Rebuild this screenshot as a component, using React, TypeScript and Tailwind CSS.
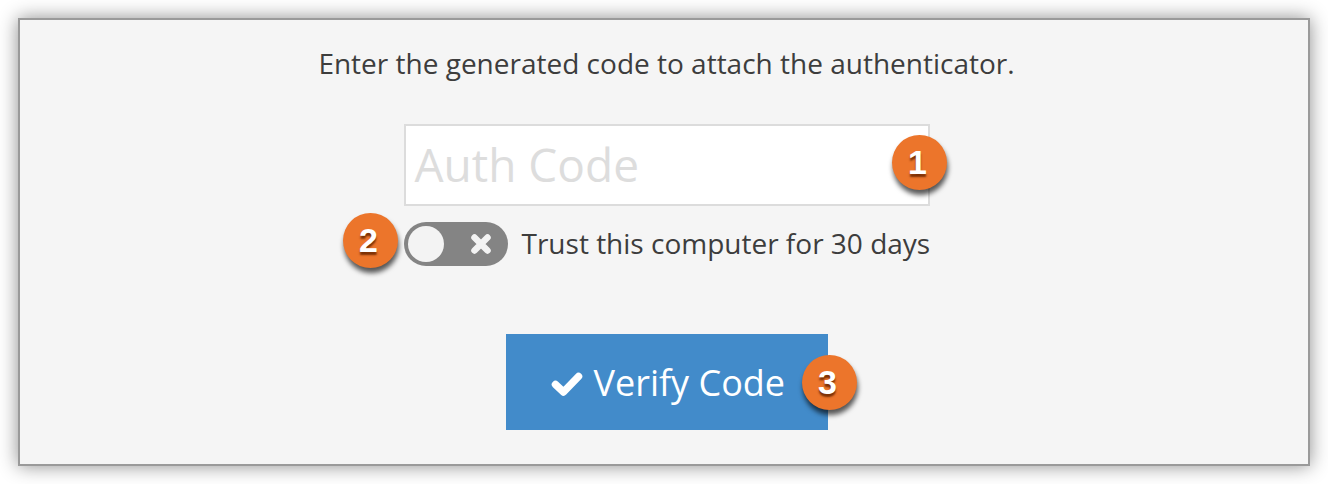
import React from "react";

function Badge({ n, className }: { n: string; className: string }) {
  return (
    <div
      className={`absolute w-[55px] h-[55px] pr-[3px] pb-[2px] rounded-full bg-[#ec752b] flex items-center justify-center text-white text-[34px] font-bold leading-none [font-family:'Liberation_Sans',sans-serif] [text-shadow:0_3px_2px_rgba(110,40,0,0.9)] shadow-[1px_5px_5px_rgba(0,0,0,0.65)] ${className}`}
    >
      {n}
    </div>
  );
}

export default function App() {
  return (
    <div className="w-[1328px] h-[484px] bg-white pt-[18px] pl-[18px] [font-family:'Open_Sans',sans-serif]">
      <div className="w-[1292px] h-[448px] pl-[5px] border-2 border-[#9a9a9a] bg-[#f5f5f5] shadow-[0_0_18px_rgba(0,0,0,0.45)] flex flex-col items-center">
        <p className="mt-[24px] h-[38px] leading-[38px] text-[28px] text-[#3d3d3d] whitespace-nowrap">
          Enter the generated code to attach the authenticator.
        </p>
        <div className="relative mt-[42px] w-[526px] h-[82px] border-2 border-[#dcdcdc] bg-white flex items-center pl-[9px] pb-[2px] text-[46px] text-[#dddddd]">
          Auth Code
          <Badge n="1" className="left-[486px] top-[9px]" />
        </div>
        <div className="mt-[16px] w-[526px] h-[44px] relative flex items-center gap-[14px]">
          <Badge n="2" className="left-[-61px] top-[-9px]" />
          <div className="w-[104px] h-[44px] shrink-0 rounded-full bg-[#848484] flex items-center justify-between pl-[4px] pr-[15px]">
            <div className="w-[36px] h-[36px] rounded-full bg-[#f3f3f3]" />
            <svg width="24" height="24" viewBox="0 0 24 24">
              <path d="M5.5 5.5 18.5 18.5M18.5 5.5 5.5 18.5" stroke="#f3f3f3" strokeWidth="6.5" strokeLinecap="round" />
            </svg>
          </div>
          <span className="text-[28px] text-[#3d3d3d] whitespace-nowrap pb-[2px]">Trust this computer for 30 days</span>
        </div>
        <div className="relative mt-[68px] w-[322px] h-[96px] bg-[#428bca] flex items-center pl-[45px] gap-[11px] text-white text-[36px]">
          <svg width="32" height="26" viewBox="0 0 32 26" className="mt-[3px]">
            <path d="M4.5 13.5 12.5 21 27.5 5.5" fill="none" stroke="#fff" strokeWidth="7.5" strokeLinecap="round" strokeLinejoin="round" />
          </svg>
          <span className="pt-[2px]">Verify Code</span>
          <Badge n="3" className="left-[296px] top-[21px]" />
        </div>
      </div>
    </div>
  );
}
